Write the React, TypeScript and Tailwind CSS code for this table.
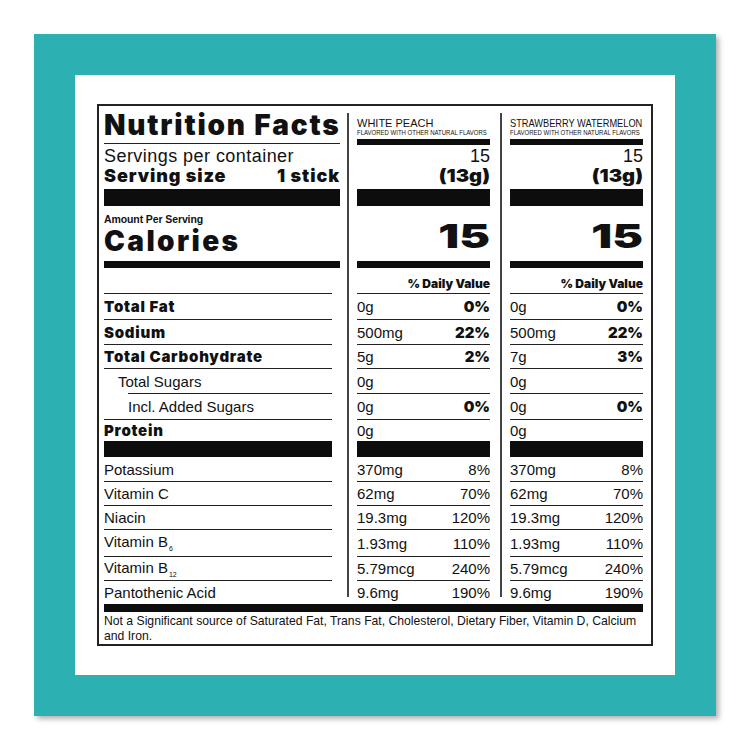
import React from 'react';

const heavy = "font-['Inter',sans-serif] font-black";

type Row = {
  name: React.ReactNode;
  bold?: boolean;
  pad?: string;
  h: string;
  rule?: string;
  a: [string, string];
  b: [string, string];
  dvBold?: boolean;
};

const upper: Row[] = [
  { name: 'Total Fat', bold: true, h: 'h-[25px]', rule: 'h-px bg-[#222]', a: ['0g', '0%'], b: ['0g', '0%'], dvBold: true },
  { name: 'Sodium', bold: true, h: 'h-[24px]', rule: 'h-px bg-[#222]', a: ['500mg', '22%'], b: ['500mg', '22%'], dvBold: true },
  { name: 'Total Carbohydrate', bold: true, h: 'h-[23px]', rule: 'h-px bg-[#222]', a: ['5g', '2%'], b: ['7g', '3%'], dvBold: true },
  { name: 'Total Sugars', pad: 'pl-[14px]', h: 'h-[24px]', rule: 'h-px bg-[#222] ml-[24px]', a: ['0g', ''], b: ['0g', ''] },
  { name: 'Incl. Added Sugars', pad: 'pl-[24px]', h: 'h-[25px]', rule: 'h-px bg-[#222]', a: ['0g', '0%'], b: ['0g', '0%'], dvBold: true },
  { name: 'Protein', bold: true, h: 'h-[21px]', a: ['0g', ''], b: ['0g', ''] },
];

const lower: Row[] = [
  { name: 'Potassium', h: 'h-[24px]', rule: 'h-px bg-[#222]', a: ['370mg', '8%'], b: ['370mg', '8%'] },
  { name: 'Vitamin C', h: 'h-[23px]', rule: 'h-px bg-[#222]', a: ['62mg', '70%'], b: ['62mg', '70%'] },
  { name: 'Niacin', h: 'h-[23px]', rule: 'h-px bg-[#222]', a: ['19.3mg', '120%'], b: ['19.3mg', '120%'] },
  {
    name: (
      <span>
        Vitamin B<span className="text-[7px] align-[-4px] ml-px">6</span>
      </span>
    ),
    h: 'h-[26px]',
    rule: 'h-px bg-[#222]',
    a: ['1.93mg', '110%'],
    b: ['1.93mg', '110%'],
  },
  {
    name: (
      <span>
        Vitamin B<span className="text-[7px] align-[-4px] ml-px">12</span>
      </span>
    ),
    h: 'h-[23px]',
    rule: 'h-px bg-[#222]',
    a: ['5.79mcg', '240%'],
    b: ['5.79mcg', '240%'],
  },
  { name: 'Pantothenic Acid', h: 'h-[23px]', a: ['9.6mg', '190%'], b: ['9.6mg', '190%'] },
];

const NameRows = ({ rows }: { rows: Row[] }) => (
  <>
    {rows.map((r, i) => (
      <div key={i}>
        <div
          className={`${r.h} flex items-center text-[15px] leading-none ${r.pad ?? ''} ${
            r.bold ? `${heavy} tracking-[0.05em]` : ''
          }`}
        >
          {r.name}
        </div>
        {r.rule && <div className={r.rule} />}
      </div>
    ))}
  </>
);

const ValueRows = ({ rows, which }: { rows: Row[]; which: 'a' | 'b' }) => (
  <>
    {rows.map((r, i) => (
      <div key={i}>
        <div className={`${r.h} flex items-center justify-between text-[15px] leading-none`}>
          <span>{r[which][0]}</span>
          <span className={r.dvBold ? heavy : ''}>{r[which][1]}</span>
        </div>
        {r.rule && <div className="h-px bg-[#222]" />}
      </div>
    ))}
  </>
);

const FlavorColumn = ({ title, narrow, which }: { title: string; narrow?: boolean; which: 'a' | 'b' }) => (
  <div className="w-[133px] flex flex-col">
    <div className="h-[33px] pt-[12px]">
      <div
        className={`text-[11px] leading-[11px] whitespace-nowrap origin-left ${narrow ? 'scale-x-[0.84]' : ''}`}
      >
        {title}
      </div>
      <div className="text-[7.5px] leading-[8px] whitespace-nowrap origin-left scale-x-[0.8]">
        FLAVORED WITH OTHER NATURAL FLAVORS
      </div>
    </div>
    <div className="h-[6px] bg-[#0d0d0d]" />
    <div className="h-[44px] pt-[2px] text-right">
      <div className="text-[18px] leading-[19px]">15</div>
      <div className={`text-[18px] leading-[19px] origin-right scale-x-[1.12] ${heavy}`}>(13g)</div>
    </div>
    <div className="h-[17px] bg-[#0d0d0d]" />
    <div className="h-[55px] pt-[14px] text-right">
      <div className={`text-[33px] leading-[33px] origin-right scale-x-[1.4] ${heavy}`}>15</div>
    </div>
    <div className="h-[7px] bg-[#0d0d0d]" />
    <div className={`h-[25px] pt-[10px] text-right text-[12px] leading-[12px] ${heavy}`}>% Daily Value</div>
    <div className="h-px bg-[#222]" />
    <ValueRows rows={upper} which={which} />
    <div className="h-[16px] bg-[#0d0d0d]" />
    <ValueRows rows={lower} which={which} />
  </div>
);

export default function App() {
  return (
    <div className="w-[750px] h-[750px] bg-white p-[34px] font-['Liberation_Sans',Arial,sans-serif] text-[#111]">
      <div className="w-[682px] h-[682px] bg-[#2db0b2] p-[41px] shadow-[3px_3px_5px_rgba(0,0,0,0.3)]">
        <div className="w-[600px] h-[600px] bg-white pt-[29px] px-[22px]">
          <div className="border-2 border-[#222] pl-[5px] pr-[8px]">
            <div className="flex">
              {/* left column */}
              <div className="w-[236px] flex flex-col">
                <div className={`h-[37px] pt-[5px] text-[28px] leading-[28px] whitespace-nowrap tracking-[0.065em] ${heavy}`}>
                  Nutrition Facts
                </div>
                <div className="h-px bg-[#222]" />
                <div className="h-[45px] pt-[3px]">
                  <div className="text-[18px] leading-[19px] tracking-[0.025em]">Servings per container</div>
                  <div className={`flex justify-between text-[18px] leading-[19px] tracking-[0.05em] ${heavy}`}>
                    <span>Serving size</span>
                    <span>1 stick</span>
                  </div>
                </div>
                <div className="h-[17px] bg-[#0d0d0d]" />
                <div className="h-[55px] pt-[8px]">
                  <div className="text-[10.5px] leading-[11px] font-bold tracking-[-0.01em]">Amount Per Serving</div>
                  <div className={`mt-[3px] text-[28px] leading-[26px] tracking-[0.085em] ${heavy}`}>Calories</div>
                </div>
                <div className="h-[7px] bg-[#0d0d0d]" />
                <div className="h-[25px]" />
                <div className="mr-[8px]">
                  <div className="h-px bg-[#222]" />
                  <NameRows rows={upper} />
                  <div className="h-[16px] bg-[#0d0d0d]" />
                  <NameRows rows={lower} />
                </div>
              </div>

              <div className="ml-[7px] w-[2px] my-[7px] bg-[#444]" />
              <div className="ml-[8px]">
                <FlavorColumn title="WHITE PEACH" which="a" />
              </div>
              <div className="ml-[10px] w-[2px] my-[7px] bg-[#444]" />
              <div className="ml-[8px]">
                <FlavorColumn title="STRAWBERRY WATERMELON" narrow which="b" />
              </div>
            </div>

            <div className="h-[8px] bg-[#0d0d0d]" />
            <div className="pt-[2px] text-[12.2px] leading-[15px]">
              Not a Significant source of Saturated Fat, Trans Fat, Cholesterol, Dietary Fiber, Vitamin D, Calcium
              <br />
              and Iron.
            </div>
          </div>
        </div>
      </div>
    </div>
  );
}
